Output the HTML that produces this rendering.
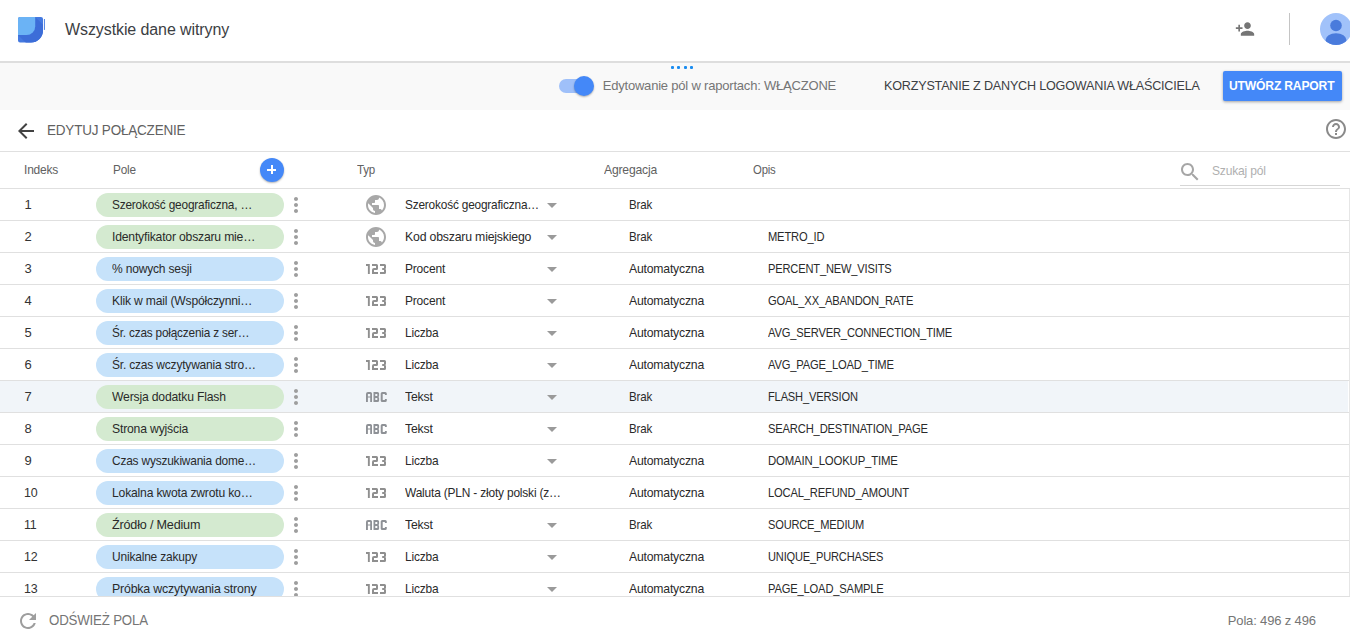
<!DOCTYPE html><html><head><meta charset="utf-8"><style>
html,body{margin:0;padding:0;width:1350px;height:639px;overflow:hidden;background:#fff;font-family:"Liberation Sans",sans-serif;}
.t{position:absolute;white-space:nowrap;}
.ic{position:absolute;display:block;}
.b{position:absolute;}
</style></head><body>
<div class="b" style="left:0;top:0;width:1350px;height:61px;background:#fff"></div>
<svg class="ic" style="left:0;top:0;width:60px;height:60px" viewBox="0 0 60 60">
<defs><clipPath id="lg"><path d="M20 17H41A2 2 0 0 1 43 19V30.5A12 12 0 0 1 31 42.5H20A2 2 0 0 1 18 40.5V19A2 2 0 0 1 20 17Z"/></clipPath></defs>
<path fill="#4479e0" d="M20 17H41A2 2 0 0 1 43 19V30.5A12 12 0 0 1 31 42.5H20A2 2 0 0 1 18 40.5V19A2 2 0 0 1 20 17Z"/>
<path clip-path="url(#lg)" fill="#3c6dd8" d="M35.2 17L45 26.8V45H28L18 35H26.5A8.7 8.7 0 0 0 35.2 26.3Z"/>
<path fill="#6bb3f5" d="M20 17H35.2V26.3A8.7 8.7 0 0 1 26.5 35H18V19A2 2 0 0 1 20 17Z"/>
<rect x="43.9" y="19" width="1.1" height="10.9" fill="#5b8be6"/>
</svg>
<div class="t" style="left:65.00px;top:19.71px;font-size:16px;line-height:20px;color:#3c4043;letter-spacing:-0.095px;">Wszystkie dane witryny</div>
<svg class="ic" style="left:1235px;top:19px;width:20px;height:20px" viewBox="0 0 24 24"><path fill="#757575" d="M15 12c2.21 0 4-1.79 4-4s-1.79-4-4-4-4 1.79-4 4 1.79 4 4 4zm-9-2V7H4v3H1v2h3v3h2v-3h3v-2H6zm9 4c-2.67 0-8 1.34-8 4v2h16v-2c0-2.66-5.33-4-8-4z"/></svg>
<div class="b" style="left:1289px;top:13px;width:1px;height:32px;background:#c4c4c4"></div>
<svg class="ic" style="left:1320px;top:13px;width:32px;height:32px" viewBox="0 0 32 32">
<defs><clipPath id="av"><circle cx="16" cy="16" r="16"/></clipPath></defs>
<circle cx="16" cy="16" r="16" fill="#a1c2fa"/>
<g clip-path="url(#av)"><circle cx="16" cy="12.5" r="5.8" fill="#4a7bdc"/><ellipse cx="16" cy="27" rx="10.5" ry="6.8" fill="#4a7bdc"/></g>
</svg>
<div class="b" style="left:0;top:61px;width:1350px;height:2px;background:#dedede"></div>
<div class="b" style="left:0;top:63px;width:1350px;height:47px;background:#f9f9f9"></div>
<div class="b" style="left:671.00px;top:66px;width:3px;height:3px;border-radius:1px;background:#1a8cf0"></div>
<div class="b" style="left:677.35px;top:66px;width:3px;height:3px;border-radius:1px;background:#1a8cf0"></div>
<div class="b" style="left:683.70px;top:66px;width:3px;height:3px;border-radius:1px;background:#1a8cf0"></div>
<div class="b" style="left:690.05px;top:66px;width:3px;height:3px;border-radius:1px;background:#1a8cf0"></div>
<div class="b" style="left:559px;top:79px;width:32px;height:14px;border-radius:7px;background:#9fc0f9"></div>
<div class="b" style="left:574px;top:76px;width:20px;height:20px;border-radius:50%;background:#4488f8;box-shadow:0 1px 2px rgba(0,0,0,.3)"></div>
<div class="t" style="left:602.70px;top:77.70px;font-size:13px;line-height:16px;color:#757575;letter-spacing:-0.200px;">Edytowanie pól w raportach: WŁĄCZONE</div>
<div class="t" style="left:883.50px;top:77.70px;font-size:13px;line-height:16px;color:#3c4043;letter-spacing:-0.200px;transform:scaleX(0.9685);transform-origin:0 0;">KORZYSTANIE Z DANYCH LOGOWANIA WŁAŚCICIELA</div>
<div class="b" style="left:1223px;top:71px;width:119px;height:30px;border-radius:2px;background:#4488f8;box-shadow:0 1px 3px rgba(0,0,0,.35)"></div>
<div class="t" style="left:1229.00px;top:78.20px;font-size:13px;line-height:16px;color:#ffffff;letter-spacing:-0.200px;transform:scaleX(0.9331);transform-origin:0 0;font-weight:bold;">UTWÓRZ RAPORT</div>
<svg class="ic" style="left:14px;top:119px;width:24px;height:24px" viewBox="0 0 24 24"><path fill="#424242" d="M20 11H7.83l5.59-5.59L12 4l-8 8 8 8 1.41-1.41L7.83 13H20v-2z"/></svg>
<div class="t" style="left:46.70px;top:121.27px;font-size:14px;line-height:18px;color:#616161;letter-spacing:-0.200px;transform:scaleX(0.9631);transform-origin:0 0;">EDYTUJ POŁĄCZENIE</div>
<svg class="ic" style="left:1324px;top:117px;width:24px;height:24px" viewBox="0 0 24 24"><path fill="#8a8a8a" d="M11 18h2v-2h-2v2zm1-16C6.48 2 2 6.48 2 12s4.48 10 10 10 10-4.48 10-10S17.52 2 12 2zm0 18c-4.41 0-8-3.59-8-8s3.59-8 8-8 8 3.59 8 8-3.59 8-8 8zm0-14c-2.21 0-4 1.790-4 4h2c0-1.1.9-2 2-2s2 .9 2 2c0 2-3 1.75-3 5h2c0-2.25 3-2.5 3-5 0-2.21-1.79-4-4-4z"/></svg>
<div class="b" style="left:0;top:151px;width:1350px;height:1px;background:#e0e0e0"></div>
<div class="t" style="left:24.40px;top:161.70px;font-size:13px;line-height:16px;color:#616161;letter-spacing:-0.200px;transform:scaleX(0.9211);transform-origin:0 0;">Indeks</div>
<div class="t" style="left:112.60px;top:161.70px;font-size:13px;line-height:16px;color:#616161;letter-spacing:-0.200px;transform:scaleX(0.9055);transform-origin:0 0;">Pole</div>
<div class="b" style="left:260px;top:158px;width:24px;height:24px;border-radius:50%;background:#4488f8;box-shadow:0 1px 2px rgba(0,0,0,.3)"></div>
<div class="b" style="left:267px;top:168.5px;width:9px;height:2px;background:#fff"></div>
<div class="b" style="left:270.5px;top:165px;width:2px;height:9px;background:#fff"></div>
<div class="t" style="left:356.70px;top:161.70px;font-size:13px;line-height:16px;color:#616161;letter-spacing:-0.200px;transform:scaleX(0.8883);transform-origin:0 0;">Typ</div>
<div class="t" style="left:604.40px;top:161.70px;font-size:13px;line-height:16px;color:#616161;letter-spacing:-0.200px;transform:scaleX(0.9355);transform-origin:0 0;">Agregacja</div>
<div class="t" style="left:752.50px;top:161.70px;font-size:13px;line-height:16px;color:#616161;letter-spacing:-0.200px;transform:scaleX(0.8712);transform-origin:0 0;">Opis</div>
<svg class="ic" style="left:1178px;top:160px;width:24px;height:24px" viewBox="0 0 24 24"><path fill="#a6a6a6" d="M15.5 14h-.79l-.28-.27C15.41 12.59 16 11.11 16 9.5 16 5.91 13.09 3 9.5 3S3 5.91 3 9.5 5.91 16 9.5 16c1.61 0 3.09-.59 4.230-1.57l.27.28v.79l5 4.99L20.49 19l-4.99-5zm-6 0C7.01 14 5 11.99 5 9.5S7.01 5 9.5 5 14 7.01 14 9.5 11.99 14 9.5 14z"/></svg>
<div class="t" style="left:1212.40px;top:162.70px;font-size:13px;line-height:16px;color:#b0b0b0;letter-spacing:-0.200px;transform:scaleX(0.9278);transform-origin:0 0;">Szukaj pól</div>
<div class="b" style="left:1180px;top:185px;width:160px;height:1px;background:#d6d6d6"></div>
<div class="b" style="left:0;top:188px;width:1350px;height:1px;background:#e0e0e0"></div>
<div class="b" style="left:24px;top:189px;"></div><div class="t" style="left:24.40px;top:196.70px;font-size:13px;line-height:16px;color:#333333;">1</div>
<div class="b" style="left:96px;top:193px;width:188px;height:24px;border-radius:12px;background:#d4ead0"></div>
<div class="t" style="left:112.20px;top:196.70px;font-size:13px;line-height:16px;color:#2a2a2a;letter-spacing:-0.200px;transform:scaleX(0.9099);transform-origin:0 0;">Szerokość geograficzna, …</div>
<svg class="ic" style="left:284px;top:193px;width:24px;height:24px" viewBox="0 0 24 24"><path fill="#9e9e9e" d="M12 8c1.1 0 2-.9 2-2s-.9-2-2-2-2 .9-2 2 .9 2 2 2zm0 2c-1.1 0-2 .9-2 2s.9 2 2 2 2-.9 2-2-.9-2-2-2zm0 6c-1.1 0-2 .9-2 2s.9 2 2 2 2-.9 2-2-.9-2-2-2z"/></svg>
<svg class="ic" style="left:364px;top:193px;width:24px;height:24px" viewBox="0 0 24 24"><path fill="#a8a8a8" d="M12 2C6.48 2 2 6.48 2 12s4.48 10 10 10 10-4.48 10-10S17.52 2 12 2zm-1 17.93c-3.95-.49-7-3.85-7-7.930 0-.62.08-1.21.21-1.79L9 15v1c0 1.1.9 2 2 2v1.93zm6.9-2.54c-.26-.81-1-1.39-1.9-1.39h-1v-3c0-.55-.45-1-1-1H8v-2h2c.55 0 1-.45 1-1V7h2c1.1 0 2-.9 2-2v-.41c2.93 1.19 5 4.06 5 7.410 0 2.08-.8 3.97-2.1 5.39z"/></svg>
<div class="t" style="left:404.60px;top:196.70px;font-size:13px;line-height:16px;color:#2a2a2a;letter-spacing:-0.200px;transform:scaleX(0.9106);transform-origin:0 0;">Szerokość geograficzna…</div>
<svg class="ic" style="left:547px;top:202.5px;width:10px;height:5px" viewBox="0 0 10 5"><path fill="#9a9a9a" d="M0 0h10l-5 5z"/></svg>
<div class="t" style="left:628.60px;top:196.70px;font-size:13px;line-height:16px;color:#2a2a2a;letter-spacing:-0.200px;transform:scaleX(0.8864);transform-origin:0 0;">Brak</div>
<div class="b" style="left:0;top:220px;width:1350px;height:1px;background:#e0e0e0"></div>
<div class="b" style="left:24px;top:221px;"></div><div class="t" style="left:24.40px;top:228.70px;font-size:13px;line-height:16px;color:#333333;">2</div>
<div class="b" style="left:96px;top:225px;width:188px;height:24px;border-radius:12px;background:#d4ead0"></div>
<div class="t" style="left:112.20px;top:228.70px;font-size:13px;line-height:16px;color:#2a2a2a;letter-spacing:-0.200px;transform:scaleX(0.9353);transform-origin:0 0;">Identyfikator obszaru mie…</div>
<svg class="ic" style="left:284px;top:225px;width:24px;height:24px" viewBox="0 0 24 24"><path fill="#9e9e9e" d="M12 8c1.1 0 2-.9 2-2s-.9-2-2-2-2 .9-2 2 .9 2 2 2zm0 2c-1.1 0-2 .9-2 2s.9 2 2 2 2-.9 2-2-.9-2-2-2zm0 6c-1.1 0-2 .9-2 2s.9 2 2 2 2-.9 2-2-.9-2-2-2z"/></svg>
<svg class="ic" style="left:364px;top:225px;width:24px;height:24px" viewBox="0 0 24 24"><path fill="#a8a8a8" d="M12 2C6.48 2 2 6.48 2 12s4.48 10 10 10 10-4.48 10-10S17.52 2 12 2zm-1 17.93c-3.95-.49-7-3.85-7-7.930 0-.62.08-1.21.21-1.79L9 15v1c0 1.1.9 2 2 2v1.93zm6.9-2.54c-.26-.81-1-1.39-1.9-1.39h-1v-3c0-.55-.45-1-1-1H8v-2h2c.55 0 1-.45 1-1V7h2c1.1 0 2-.9 2-2v-.41c2.93 1.19 5 4.06 5 7.410 0 2.08-.8 3.97-2.1 5.39z"/></svg>
<div class="t" style="left:404.60px;top:228.70px;font-size:13px;line-height:16px;color:#2a2a2a;letter-spacing:-0.200px;transform:scaleX(0.9447);transform-origin:0 0;">Kod obszaru miejskiego</div>
<svg class="ic" style="left:547px;top:234.5px;width:10px;height:5px" viewBox="0 0 10 5"><path fill="#9a9a9a" d="M0 0h10l-5 5z"/></svg>
<div class="t" style="left:628.60px;top:228.70px;font-size:13px;line-height:16px;color:#2a2a2a;letter-spacing:-0.200px;transform:scaleX(0.8864);transform-origin:0 0;">Brak</div>
<div class="t" style="left:768.30px;top:228.70px;font-size:13px;line-height:16px;color:#2a2a2a;letter-spacing:-0.200px;transform:scaleX(0.8582);transform-origin:0 0;">METRO_ID</div>
<div class="b" style="left:0;top:252px;width:1350px;height:1px;background:#e0e0e0"></div>
<div class="b" style="left:24px;top:253px;"></div><div class="t" style="left:24.40px;top:260.70px;font-size:13px;line-height:16px;color:#333333;">3</div>
<div class="b" style="left:96px;top:257px;width:188px;height:24px;border-radius:12px;background:#c6e2fa"></div>
<div class="t" style="left:112.20px;top:260.70px;font-size:13px;line-height:16px;color:#2a2a2a;letter-spacing:-0.200px;transform:scaleX(0.9259);transform-origin:0 0;">% nowych sesji</div>
<svg class="ic" style="left:284px;top:257px;width:24px;height:24px" viewBox="0 0 24 24"><path fill="#9e9e9e" d="M12 8c1.1 0 2-.9 2-2s-.9-2-2-2-2 .9-2 2 .9 2 2 2zm0 2c-1.1 0-2 .9-2 2s.9 2 2 2 2-.9 2-2-.9-2-2-2zm0 6c-1.1 0-2 .9-2 2s.9 2 2 2 2-.9 2-2-.9-2-2-2z"/></svg>
<svg class="ic" style="left:366px;top:264px;width:20px;height:10px" viewBox="0 0 20 10"><path fill="#8f8f8f" d="M0 0h3.8v10h-1.9v-8h-1.9zM6 0h4.5a1.5 1.5 0 0 1 1.5 1.5v3a1.5 1.5 0 0 1-1.5 1.5h-2.5v2h4v2h-6v-4a2 2 0 0 1 2-2h2v-2h-4zM14 0h4.5a1.5 1.5 0 0 1 1.5 1.5v2.3l-0.5 1.2 0.5 1.2v2.3a1.5 1.5 0 0 1-1.5 1.5h-4.5v-2h4v-2h-1.8v-2h1.8v-2h-4z"/></svg>
<div class="t" style="left:404.60px;top:260.70px;font-size:13px;line-height:16px;color:#2a2a2a;letter-spacing:-0.200px;transform:scaleX(0.9224);transform-origin:0 0;">Procent</div>
<svg class="ic" style="left:547px;top:266.5px;width:10px;height:5px" viewBox="0 0 10 5"><path fill="#9a9a9a" d="M0 0h10l-5 5z"/></svg>
<div class="t" style="left:628.60px;top:260.70px;font-size:13px;line-height:16px;color:#2a2a2a;letter-spacing:-0.200px;transform:scaleX(0.9381);transform-origin:0 0;">Automatyczna</div>
<div class="t" style="left:768.30px;top:260.70px;font-size:13px;line-height:16px;color:#2a2a2a;letter-spacing:-0.200px;transform:scaleX(0.8548);transform-origin:0 0;">PERCENT_NEW_VISITS</div>
<div class="b" style="left:0;top:284px;width:1350px;height:1px;background:#e0e0e0"></div>
<div class="b" style="left:24px;top:285px;"></div><div class="t" style="left:24.40px;top:292.70px;font-size:13px;line-height:16px;color:#333333;">4</div>
<div class="b" style="left:96px;top:289px;width:188px;height:24px;border-radius:12px;background:#c6e2fa"></div>
<div class="t" style="left:112.20px;top:292.70px;font-size:13px;line-height:16px;color:#2a2a2a;letter-spacing:-0.200px;transform:scaleX(0.9328);transform-origin:0 0;">Klik w mail (Współczynni…</div>
<svg class="ic" style="left:284px;top:289px;width:24px;height:24px" viewBox="0 0 24 24"><path fill="#9e9e9e" d="M12 8c1.1 0 2-.9 2-2s-.9-2-2-2-2 .9-2 2 .9 2 2 2zm0 2c-1.1 0-2 .9-2 2s.9 2 2 2 2-.9 2-2-.9-2-2-2zm0 6c-1.1 0-2 .9-2 2s.9 2 2 2 2-.9 2-2-.9-2-2-2z"/></svg>
<svg class="ic" style="left:366px;top:296px;width:20px;height:10px" viewBox="0 0 20 10"><path fill="#8f8f8f" d="M0 0h3.8v10h-1.9v-8h-1.9zM6 0h4.5a1.5 1.5 0 0 1 1.5 1.5v3a1.5 1.5 0 0 1-1.5 1.5h-2.5v2h4v2h-6v-4a2 2 0 0 1 2-2h2v-2h-4zM14 0h4.5a1.5 1.5 0 0 1 1.5 1.5v2.3l-0.5 1.2 0.5 1.2v2.3a1.5 1.5 0 0 1-1.5 1.5h-4.5v-2h4v-2h-1.8v-2h1.8v-2h-4z"/></svg>
<div class="t" style="left:404.60px;top:292.70px;font-size:13px;line-height:16px;color:#2a2a2a;letter-spacing:-0.200px;transform:scaleX(0.9224);transform-origin:0 0;">Procent</div>
<svg class="ic" style="left:547px;top:298.5px;width:10px;height:5px" viewBox="0 0 10 5"><path fill="#9a9a9a" d="M0 0h10l-5 5z"/></svg>
<div class="t" style="left:628.60px;top:292.70px;font-size:13px;line-height:16px;color:#2a2a2a;letter-spacing:-0.200px;transform:scaleX(0.9381);transform-origin:0 0;">Automatyczna</div>
<div class="t" style="left:768.30px;top:292.70px;font-size:13px;line-height:16px;color:#2a2a2a;letter-spacing:-0.200px;transform:scaleX(0.8584);transform-origin:0 0;">GOAL_XX_ABANDON_RATE</div>
<div class="b" style="left:0;top:316px;width:1350px;height:1px;background:#e0e0e0"></div>
<div class="b" style="left:24px;top:317px;"></div><div class="t" style="left:24.40px;top:324.70px;font-size:13px;line-height:16px;color:#333333;">5</div>
<div class="b" style="left:96px;top:321px;width:188px;height:24px;border-radius:12px;background:#c6e2fa"></div>
<div class="t" style="left:112.20px;top:324.70px;font-size:13px;line-height:16px;color:#2a2a2a;letter-spacing:-0.200px;transform:scaleX(0.9066);transform-origin:0 0;">Śr. czas połączenia z ser…</div>
<svg class="ic" style="left:284px;top:321px;width:24px;height:24px" viewBox="0 0 24 24"><path fill="#9e9e9e" d="M12 8c1.1 0 2-.9 2-2s-.9-2-2-2-2 .9-2 2 .9 2 2 2zm0 2c-1.1 0-2 .9-2 2s.9 2 2 2 2-.9 2-2-.9-2-2-2zm0 6c-1.1 0-2 .9-2 2s.9 2 2 2 2-.9 2-2-.9-2-2-2z"/></svg>
<svg class="ic" style="left:366px;top:328px;width:20px;height:10px" viewBox="0 0 20 10"><path fill="#8f8f8f" d="M0 0h3.8v10h-1.9v-8h-1.9zM6 0h4.5a1.5 1.5 0 0 1 1.5 1.5v3a1.5 1.5 0 0 1-1.5 1.5h-2.5v2h4v2h-6v-4a2 2 0 0 1 2-2h2v-2h-4zM14 0h4.5a1.5 1.5 0 0 1 1.5 1.5v2.3l-0.5 1.2 0.5 1.2v2.3a1.5 1.5 0 0 1-1.5 1.5h-4.5v-2h4v-2h-1.8v-2h1.8v-2h-4z"/></svg>
<div class="t" style="left:404.60px;top:324.70px;font-size:13px;line-height:16px;color:#2a2a2a;letter-spacing:-0.200px;transform:scaleX(0.9162);transform-origin:0 0;">Liczba</div>
<svg class="ic" style="left:547px;top:330.5px;width:10px;height:5px" viewBox="0 0 10 5"><path fill="#9a9a9a" d="M0 0h10l-5 5z"/></svg>
<div class="t" style="left:628.60px;top:324.70px;font-size:13px;line-height:16px;color:#2a2a2a;letter-spacing:-0.200px;transform:scaleX(0.9381);transform-origin:0 0;">Automatyczna</div>
<div class="t" style="left:768.30px;top:324.70px;font-size:13px;line-height:16px;color:#2a2a2a;letter-spacing:-0.200px;transform:scaleX(0.8577);transform-origin:0 0;">AVG_SERVER_CONNECTION_TIME</div>
<div class="b" style="left:0;top:348px;width:1350px;height:1px;background:#e0e0e0"></div>
<div class="b" style="left:24px;top:349px;"></div><div class="t" style="left:24.40px;top:356.70px;font-size:13px;line-height:16px;color:#333333;">6</div>
<div class="b" style="left:96px;top:353px;width:188px;height:24px;border-radius:12px;background:#c6e2fa"></div>
<div class="t" style="left:112.20px;top:356.70px;font-size:13px;line-height:16px;color:#2a2a2a;letter-spacing:-0.200px;transform:scaleX(0.9218);transform-origin:0 0;">Śr. czas wczytywania stro…</div>
<svg class="ic" style="left:284px;top:353px;width:24px;height:24px" viewBox="0 0 24 24"><path fill="#9e9e9e" d="M12 8c1.1 0 2-.9 2-2s-.9-2-2-2-2 .9-2 2 .9 2 2 2zm0 2c-1.1 0-2 .9-2 2s.9 2 2 2 2-.9 2-2-.9-2-2-2zm0 6c-1.1 0-2 .9-2 2s.9 2 2 2 2-.9 2-2-.9-2-2-2z"/></svg>
<svg class="ic" style="left:366px;top:360px;width:20px;height:10px" viewBox="0 0 20 10"><path fill="#8f8f8f" d="M0 0h3.8v10h-1.9v-8h-1.9zM6 0h4.5a1.5 1.5 0 0 1 1.5 1.5v3a1.5 1.5 0 0 1-1.5 1.5h-2.5v2h4v2h-6v-4a2 2 0 0 1 2-2h2v-2h-4zM14 0h4.5a1.5 1.5 0 0 1 1.5 1.5v2.3l-0.5 1.2 0.5 1.2v2.3a1.5 1.5 0 0 1-1.5 1.5h-4.5v-2h4v-2h-1.8v-2h1.8v-2h-4z"/></svg>
<div class="t" style="left:404.60px;top:356.70px;font-size:13px;line-height:16px;color:#2a2a2a;letter-spacing:-0.200px;transform:scaleX(0.9162);transform-origin:0 0;">Liczba</div>
<svg class="ic" style="left:547px;top:362.5px;width:10px;height:5px" viewBox="0 0 10 5"><path fill="#9a9a9a" d="M0 0h10l-5 5z"/></svg>
<div class="t" style="left:628.60px;top:356.70px;font-size:13px;line-height:16px;color:#2a2a2a;letter-spacing:-0.200px;transform:scaleX(0.9381);transform-origin:0 0;">Automatyczna</div>
<div class="t" style="left:768.30px;top:356.70px;font-size:13px;line-height:16px;color:#2a2a2a;letter-spacing:-0.200px;transform:scaleX(0.8602);transform-origin:0 0;">AVG_PAGE_LOAD_TIME</div>
<div class="b" style="left:0;top:380px;width:1350px;height:1px;background:#e0e0e0"></div>
<div class="b" style="left:0;top:381px;width:1348px;height:31px;background:#f1f5f9"></div>
<div class="b" style="left:24px;top:381px;"></div><div class="t" style="left:24.40px;top:388.70px;font-size:13px;line-height:16px;color:#333333;">7</div>
<div class="b" style="left:96px;top:385px;width:188px;height:24px;border-radius:12px;background:#d4ead0"></div>
<div class="t" style="left:112.20px;top:388.70px;font-size:13px;line-height:16px;color:#2a2a2a;letter-spacing:-0.200px;transform:scaleX(0.9370);transform-origin:0 0;">Wersja dodatku Flash</div>
<svg class="ic" style="left:284px;top:385px;width:24px;height:24px" viewBox="0 0 24 24"><path fill="#9e9e9e" d="M12 8c1.1 0 2-.9 2-2s-.9-2-2-2-2 .9-2 2 .9 2 2 2zm0 2c-1.1 0-2 .9-2 2s.9 2 2 2 2-.9 2-2-.9-2-2-2zm0 6c-1.1 0-2 .9-2 2s.9 2 2 2 2-.9 2-2-.9-2-2-2z"/></svg>
<svg class="ic" style="left:366px;top:392px;width:21px;height:10px" viewBox="0 0 21 10"><path fill="#8e9196" fill-rule="evenodd" d="M0 10V2a2 2 0 0 1 2-2h2.4a1.6 1.6 0 0 1 1.6 1.6V10h-1.8v-4.5h-2.3V10zM1.9 2v2.4h2.3V2zM7.5 0h4a1.6 1.6 0 0 1 1.6 1.6v2.2l-0.5 1.2 0.5 1.2v2.2a1.6 1.6 0 0 1-1.6 1.6h-4zM9.3 2v2.1h2v-2.1zM9.3 5.9v2.1h2v-2.1zM16.3 0h2.9a1.6 1.6 0 0 1 1.6 1.6v1.3h-1.9v-0.9h-2.2v6h2.2v-0.9h1.9v1.3a1.6 1.6 0 0 1-1.6 1.6h-2.9a1.6 1.6 0 0 1-1.6-1.6v-6.8a1.6 1.6 0 0 1 1.6-1.6z"/></svg>
<div class="t" style="left:404.60px;top:388.70px;font-size:13px;line-height:16px;color:#2a2a2a;letter-spacing:-0.200px;transform:scaleX(0.9404);transform-origin:0 0;">Tekst</div>
<svg class="ic" style="left:547px;top:394.5px;width:10px;height:5px" viewBox="0 0 10 5"><path fill="#9a9a9a" d="M0 0h10l-5 5z"/></svg>
<div class="t" style="left:628.60px;top:388.70px;font-size:13px;line-height:16px;color:#2a2a2a;letter-spacing:-0.200px;transform:scaleX(0.8864);transform-origin:0 0;">Brak</div>
<div class="t" style="left:768.30px;top:388.70px;font-size:13px;line-height:16px;color:#2a2a2a;letter-spacing:-0.200px;transform:scaleX(0.8551);transform-origin:0 0;">FLASH_VERSION</div>
<div class="b" style="left:0;top:412px;width:1350px;height:1px;background:#e0e0e0"></div>
<div class="b" style="left:24px;top:413px;"></div><div class="t" style="left:24.40px;top:420.70px;font-size:13px;line-height:16px;color:#333333;">8</div>
<div class="b" style="left:96px;top:417px;width:188px;height:24px;border-radius:12px;background:#d4ead0"></div>
<div class="t" style="left:112.20px;top:420.70px;font-size:13px;line-height:16px;color:#2a2a2a;letter-spacing:-0.200px;transform:scaleX(0.9381);transform-origin:0 0;">Strona wyjścia</div>
<svg class="ic" style="left:284px;top:417px;width:24px;height:24px" viewBox="0 0 24 24"><path fill="#9e9e9e" d="M12 8c1.1 0 2-.9 2-2s-.9-2-2-2-2 .9-2 2 .9 2 2 2zm0 2c-1.1 0-2 .9-2 2s.9 2 2 2 2-.9 2-2-.9-2-2-2zm0 6c-1.1 0-2 .9-2 2s.9 2 2 2 2-.9 2-2-.9-2-2-2z"/></svg>
<svg class="ic" style="left:366px;top:424px;width:21px;height:10px" viewBox="0 0 21 10"><path fill="#8e9196" fill-rule="evenodd" d="M0 10V2a2 2 0 0 1 2-2h2.4a1.6 1.6 0 0 1 1.6 1.6V10h-1.8v-4.5h-2.3V10zM1.9 2v2.4h2.3V2zM7.5 0h4a1.6 1.6 0 0 1 1.6 1.6v2.2l-0.5 1.2 0.5 1.2v2.2a1.6 1.6 0 0 1-1.6 1.6h-4zM9.3 2v2.1h2v-2.1zM9.3 5.9v2.1h2v-2.1zM16.3 0h2.9a1.6 1.6 0 0 1 1.6 1.6v1.3h-1.9v-0.9h-2.2v6h2.2v-0.9h1.9v1.3a1.6 1.6 0 0 1-1.6 1.6h-2.9a1.6 1.6 0 0 1-1.6-1.6v-6.8a1.6 1.6 0 0 1 1.6-1.6z"/></svg>
<div class="t" style="left:404.60px;top:420.70px;font-size:13px;line-height:16px;color:#2a2a2a;letter-spacing:-0.200px;transform:scaleX(0.9404);transform-origin:0 0;">Tekst</div>
<svg class="ic" style="left:547px;top:426.5px;width:10px;height:5px" viewBox="0 0 10 5"><path fill="#9a9a9a" d="M0 0h10l-5 5z"/></svg>
<div class="t" style="left:628.60px;top:420.70px;font-size:13px;line-height:16px;color:#2a2a2a;letter-spacing:-0.200px;transform:scaleX(0.8864);transform-origin:0 0;">Brak</div>
<div class="t" style="left:768.30px;top:420.70px;font-size:13px;line-height:16px;color:#2a2a2a;letter-spacing:-0.200px;transform:scaleX(0.8607);transform-origin:0 0;">SEARCH_DESTINATION_PAGE</div>
<div class="b" style="left:0;top:444px;width:1350px;height:1px;background:#e0e0e0"></div>
<div class="b" style="left:24px;top:445px;"></div><div class="t" style="left:24.40px;top:452.70px;font-size:13px;line-height:16px;color:#333333;">9</div>
<div class="b" style="left:96px;top:449px;width:188px;height:24px;border-radius:12px;background:#c6e2fa"></div>
<div class="t" style="left:112.20px;top:452.70px;font-size:13px;line-height:16px;color:#2a2a2a;letter-spacing:-0.200px;transform:scaleX(0.9150);transform-origin:0 0;">Czas wyszukiwania dome…</div>
<svg class="ic" style="left:284px;top:449px;width:24px;height:24px" viewBox="0 0 24 24"><path fill="#9e9e9e" d="M12 8c1.1 0 2-.9 2-2s-.9-2-2-2-2 .9-2 2 .9 2 2 2zm0 2c-1.1 0-2 .9-2 2s.9 2 2 2 2-.9 2-2-.9-2-2-2zm0 6c-1.1 0-2 .9-2 2s.9 2 2 2 2-.9 2-2-.9-2-2-2z"/></svg>
<svg class="ic" style="left:366px;top:456px;width:20px;height:10px" viewBox="0 0 20 10"><path fill="#8f8f8f" d="M0 0h3.8v10h-1.9v-8h-1.9zM6 0h4.5a1.5 1.5 0 0 1 1.5 1.5v3a1.5 1.5 0 0 1-1.5 1.5h-2.5v2h4v2h-6v-4a2 2 0 0 1 2-2h2v-2h-4zM14 0h4.5a1.5 1.5 0 0 1 1.5 1.5v2.3l-0.5 1.2 0.5 1.2v2.3a1.5 1.5 0 0 1-1.5 1.5h-4.5v-2h4v-2h-1.8v-2h1.8v-2h-4z"/></svg>
<div class="t" style="left:404.60px;top:452.70px;font-size:13px;line-height:16px;color:#2a2a2a;letter-spacing:-0.200px;transform:scaleX(0.9162);transform-origin:0 0;">Liczba</div>
<svg class="ic" style="left:547px;top:458.5px;width:10px;height:5px" viewBox="0 0 10 5"><path fill="#9a9a9a" d="M0 0h10l-5 5z"/></svg>
<div class="t" style="left:628.60px;top:452.70px;font-size:13px;line-height:16px;color:#2a2a2a;letter-spacing:-0.200px;transform:scaleX(0.9381);transform-origin:0 0;">Automatyczna</div>
<div class="t" style="left:768.30px;top:452.70px;font-size:13px;line-height:16px;color:#2a2a2a;letter-spacing:-0.200px;transform:scaleX(0.8762);transform-origin:0 0;">DOMAIN_LOOKUP_TIME</div>
<div class="b" style="left:0;top:476px;width:1350px;height:1px;background:#e0e0e0"></div>
<div class="b" style="left:24px;top:477px;"></div><div class="t" style="left:24.40px;top:484.70px;font-size:13px;line-height:16px;color:#333333;letter-spacing:-0.200px;transform:scaleX(0.9565);transform-origin:0 0;">10</div>
<div class="b" style="left:96px;top:481px;width:188px;height:24px;border-radius:12px;background:#c6e2fa"></div>
<div class="t" style="left:112.20px;top:484.70px;font-size:13px;line-height:16px;color:#2a2a2a;letter-spacing:-0.200px;transform:scaleX(0.9342);transform-origin:0 0;">Lokalna kwota zwrotu ko…</div>
<svg class="ic" style="left:284px;top:481px;width:24px;height:24px" viewBox="0 0 24 24"><path fill="#9e9e9e" d="M12 8c1.1 0 2-.9 2-2s-.9-2-2-2-2 .9-2 2 .9 2 2 2zm0 2c-1.1 0-2 .9-2 2s.9 2 2 2 2-.9 2-2-.9-2-2-2zm0 6c-1.1 0-2 .9-2 2s.9 2 2 2 2-.9 2-2-.9-2-2-2z"/></svg>
<svg class="ic" style="left:366px;top:488px;width:20px;height:10px" viewBox="0 0 20 10"><path fill="#8f8f8f" d="M0 0h3.8v10h-1.9v-8h-1.9zM6 0h4.5a1.5 1.5 0 0 1 1.5 1.5v3a1.5 1.5 0 0 1-1.5 1.5h-2.5v2h4v2h-6v-4a2 2 0 0 1 2-2h2v-2h-4zM14 0h4.5a1.5 1.5 0 0 1 1.5 1.5v2.3l-0.5 1.2 0.5 1.2v2.3a1.5 1.5 0 0 1-1.5 1.5h-4.5v-2h4v-2h-1.8v-2h1.8v-2h-4z"/></svg>
<div class="t" style="left:404.60px;top:484.70px;font-size:13px;line-height:16px;color:#2a2a2a;letter-spacing:-0.200px;transform:scaleX(0.9177);transform-origin:0 0;">Waluta (PLN - złoty polski (z…</div>
<div class="t" style="left:628.60px;top:484.70px;font-size:13px;line-height:16px;color:#2a2a2a;letter-spacing:-0.200px;transform:scaleX(0.9381);transform-origin:0 0;">Automatyczna</div>
<div class="t" style="left:768.30px;top:484.70px;font-size:13px;line-height:16px;color:#2a2a2a;letter-spacing:-0.200px;transform:scaleX(0.8601);transform-origin:0 0;">LOCAL_REFUND_AMOUNT</div>
<div class="b" style="left:0;top:508px;width:1350px;height:1px;background:#e0e0e0"></div>
<div class="b" style="left:24px;top:509px;"></div><div class="t" style="left:24.40px;top:516.70px;font-size:13px;line-height:16px;color:#333333;letter-spacing:-0.200px;transform:scaleX(0.9565);transform-origin:0 0;">11</div>
<div class="b" style="left:96px;top:513px;width:188px;height:24px;border-radius:12px;background:#d4ead0"></div>
<div class="t" style="left:112.20px;top:516.70px;font-size:13px;line-height:16px;color:#2a2a2a;letter-spacing:-0.200px;transform:scaleX(0.9704);transform-origin:0 0;">Źródło / Medium</div>
<svg class="ic" style="left:284px;top:513px;width:24px;height:24px" viewBox="0 0 24 24"><path fill="#9e9e9e" d="M12 8c1.1 0 2-.9 2-2s-.9-2-2-2-2 .9-2 2 .9 2 2 2zm0 2c-1.1 0-2 .9-2 2s.9 2 2 2 2-.9 2-2-.9-2-2-2zm0 6c-1.1 0-2 .9-2 2s.9 2 2 2 2-.9 2-2-.9-2-2-2z"/></svg>
<svg class="ic" style="left:366px;top:520px;width:21px;height:10px" viewBox="0 0 21 10"><path fill="#8e9196" fill-rule="evenodd" d="M0 10V2a2 2 0 0 1 2-2h2.4a1.6 1.6 0 0 1 1.6 1.6V10h-1.8v-4.5h-2.3V10zM1.9 2v2.4h2.3V2zM7.5 0h4a1.6 1.6 0 0 1 1.6 1.6v2.2l-0.5 1.2 0.5 1.2v2.2a1.6 1.6 0 0 1-1.6 1.6h-4zM9.3 2v2.1h2v-2.1zM9.3 5.9v2.1h2v-2.1zM16.3 0h2.9a1.6 1.6 0 0 1 1.6 1.6v1.3h-1.9v-0.9h-2.2v6h2.2v-0.9h1.9v1.3a1.6 1.6 0 0 1-1.6 1.6h-2.9a1.6 1.6 0 0 1-1.6-1.6v-6.8a1.6 1.6 0 0 1 1.6-1.6z"/></svg>
<div class="t" style="left:404.60px;top:516.70px;font-size:13px;line-height:16px;color:#2a2a2a;letter-spacing:-0.200px;transform:scaleX(0.9404);transform-origin:0 0;">Tekst</div>
<svg class="ic" style="left:547px;top:522.5px;width:10px;height:5px" viewBox="0 0 10 5"><path fill="#9a9a9a" d="M0 0h10l-5 5z"/></svg>
<div class="t" style="left:628.60px;top:516.70px;font-size:13px;line-height:16px;color:#2a2a2a;letter-spacing:-0.200px;transform:scaleX(0.8864);transform-origin:0 0;">Brak</div>
<div class="t" style="left:768.30px;top:516.70px;font-size:13px;line-height:16px;color:#2a2a2a;letter-spacing:-0.200px;transform:scaleX(0.8512);transform-origin:0 0;">SOURCE_MEDIUM</div>
<div class="b" style="left:0;top:540px;width:1350px;height:1px;background:#e0e0e0"></div>
<div class="b" style="left:24px;top:541px;"></div><div class="t" style="left:24.40px;top:548.70px;font-size:13px;line-height:16px;color:#333333;letter-spacing:-0.200px;transform:scaleX(0.9565);transform-origin:0 0;">12</div>
<div class="b" style="left:96px;top:545px;width:188px;height:24px;border-radius:12px;background:#c6e2fa"></div>
<div class="t" style="left:112.20px;top:548.70px;font-size:13px;line-height:16px;color:#2a2a2a;letter-spacing:-0.200px;transform:scaleX(0.9206);transform-origin:0 0;">Unikalne zakupy</div>
<svg class="ic" style="left:284px;top:545px;width:24px;height:24px" viewBox="0 0 24 24"><path fill="#9e9e9e" d="M12 8c1.1 0 2-.9 2-2s-.9-2-2-2-2 .9-2 2 .9 2 2 2zm0 2c-1.1 0-2 .9-2 2s.9 2 2 2 2-.9 2-2-.9-2-2-2zm0 6c-1.1 0-2 .9-2 2s.9 2 2 2 2-.9 2-2-.9-2-2-2z"/></svg>
<svg class="ic" style="left:366px;top:552px;width:20px;height:10px" viewBox="0 0 20 10"><path fill="#8f8f8f" d="M0 0h3.8v10h-1.9v-8h-1.9zM6 0h4.5a1.5 1.5 0 0 1 1.5 1.5v3a1.5 1.5 0 0 1-1.5 1.5h-2.5v2h4v2h-6v-4a2 2 0 0 1 2-2h2v-2h-4zM14 0h4.5a1.5 1.5 0 0 1 1.5 1.5v2.3l-0.5 1.2 0.5 1.2v2.3a1.5 1.5 0 0 1-1.5 1.5h-4.5v-2h4v-2h-1.8v-2h1.8v-2h-4z"/></svg>
<div class="t" style="left:404.60px;top:548.70px;font-size:13px;line-height:16px;color:#2a2a2a;letter-spacing:-0.200px;transform:scaleX(0.9162);transform-origin:0 0;">Liczba</div>
<svg class="ic" style="left:547px;top:554.5px;width:10px;height:5px" viewBox="0 0 10 5"><path fill="#9a9a9a" d="M0 0h10l-5 5z"/></svg>
<div class="t" style="left:628.60px;top:548.70px;font-size:13px;line-height:16px;color:#2a2a2a;letter-spacing:-0.200px;transform:scaleX(0.9381);transform-origin:0 0;">Automatyczna</div>
<div class="t" style="left:768.30px;top:548.70px;font-size:13px;line-height:16px;color:#2a2a2a;letter-spacing:-0.200px;transform:scaleX(0.8507);transform-origin:0 0;">UNIQUE_PURCHASES</div>
<div class="b" style="left:0;top:572px;width:1350px;height:1px;background:#e0e0e0"></div>
<div class="b" style="left:24px;top:573px;"></div><div class="t" style="left:24.40px;top:580.70px;font-size:13px;line-height:16px;color:#333333;letter-spacing:-0.200px;transform:scaleX(0.9565);transform-origin:0 0;">13</div>
<div class="b" style="left:96px;top:577px;width:188px;height:24px;border-radius:12px;background:#c6e2fa"></div>
<div class="t" style="left:112.20px;top:580.70px;font-size:13px;line-height:16px;color:#2a2a2a;letter-spacing:-0.200px;transform:scaleX(0.9514);transform-origin:0 0;">Próbka wczytywania strony</div>
<svg class="ic" style="left:284px;top:577px;width:24px;height:24px" viewBox="0 0 24 24"><path fill="#9e9e9e" d="M12 8c1.1 0 2-.9 2-2s-.9-2-2-2-2 .9-2 2 .9 2 2 2zm0 2c-1.1 0-2 .9-2 2s.9 2 2 2 2-.9 2-2-.9-2-2-2zm0 6c-1.1 0-2 .9-2 2s.9 2 2 2 2-.9 2-2-.9-2-2-2z"/></svg>
<svg class="ic" style="left:366px;top:584px;width:20px;height:10px" viewBox="0 0 20 10"><path fill="#8f8f8f" d="M0 0h3.8v10h-1.9v-8h-1.9zM6 0h4.5a1.5 1.5 0 0 1 1.5 1.5v3a1.5 1.5 0 0 1-1.5 1.5h-2.5v2h4v2h-6v-4a2 2 0 0 1 2-2h2v-2h-4zM14 0h4.5a1.5 1.5 0 0 1 1.5 1.5v2.3l-0.5 1.2 0.5 1.2v2.3a1.5 1.5 0 0 1-1.5 1.5h-4.5v-2h4v-2h-1.8v-2h1.8v-2h-4z"/></svg>
<div class="t" style="left:404.60px;top:580.70px;font-size:13px;line-height:16px;color:#2a2a2a;letter-spacing:-0.200px;transform:scaleX(0.9162);transform-origin:0 0;">Liczba</div>
<svg class="ic" style="left:547px;top:586.5px;width:10px;height:5px" viewBox="0 0 10 5"><path fill="#9a9a9a" d="M0 0h10l-5 5z"/></svg>
<div class="t" style="left:628.60px;top:580.70px;font-size:13px;line-height:16px;color:#2a2a2a;letter-spacing:-0.200px;transform:scaleX(0.9381);transform-origin:0 0;">Automatyczna</div>
<div class="t" style="left:768.30px;top:580.70px;font-size:13px;line-height:16px;color:#2a2a2a;letter-spacing:-0.200px;transform:scaleX(0.8593);transform-origin:0 0;">PAGE_LOAD_SAMPLE</div>
<div class="b" style="left:1349px;top:189px;width:1px;height:407px;background:#e6e6e6"></div>
<div class="b" style="left:0;top:596px;width:1350px;height:43px;background:#fff;border-top:1px solid #e0e0e0"></div>
<svg class="ic" style="left:16px;top:609px;width:24px;height:24px" viewBox="0 0 24 24"><path fill="#9e9e9e" d="M17.65 6.35C16.2 4.9 14.21 4 12 4c-4.42 0-7.99 3.58-7.99 8s3.57 8 7.990 8c3.73 0 6.84-2.55 7.73-6h-2.08c-.82 2.33-3.04 4-5.65 4-3.31 0-6-2.69-6-6s2.69-6 6-6c1.66 0 3.14.69 4.22 1.78L13 11h7V4l-2.35 2.35z"/></svg>
<div class="t" style="left:48.50px;top:610.97px;font-size:14px;line-height:18px;color:#757575;letter-spacing:-0.200px;transform:scaleX(0.9494);transform-origin:0 0;">ODŚWIEŻ POLA</div>
<div class="t" style="left:1227.80px;top:612.70px;font-size:13px;line-height:16px;color:#757575;letter-spacing:-0.157px;">Pola: 496 z 496</div>
</body></html>
